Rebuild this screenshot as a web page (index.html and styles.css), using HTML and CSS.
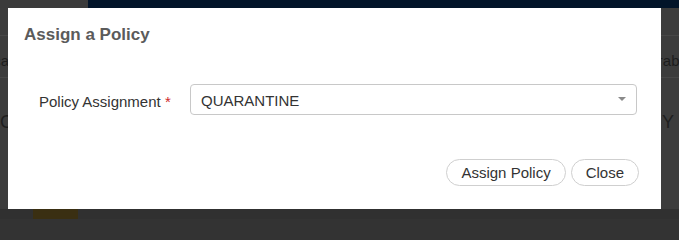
FILE: index.html
```html
<!DOCTYPE html>
<html>
<head>
<meta charset="utf-8">
<link rel="stylesheet" href="styles.css">
</head>
<body>
<div class="page">
  <div class="topbar"><div class="brand"></div><div class="nav"></div></div>
  <div class="content">
    <div class="gap-row"></div>
    <div class="thead">
      <div class="cell-left"><span>Critica</span></div>
      <div class="cell-right"><span>Vulnerable</span></div>
    </div>
    <div class="big-row">
      <div class="cell-left big"><span>C</span></div>
      <div class="cell-right big"><span>Y</span></div>
    </div>
  </div>
  <div class="bottom"><div class="chip"></div></div>
</div>

<div class="modal">
  <div class="modal-header">Assign a Policy</div>
  <div class="modal-body">
    <label class="field-label">Policy Assignment <span class="req">*</span></label>
    <div class="select">
      <span class="select-value">QUARANTINE</span>
      <span class="caret"></span>
    </div>
  </div>
  <div class="modal-footer">
    <button class="btn">Assign Policy</button>
    <button class="btn">Close</button>
  </div>
</div>
</body>
</html>
```

FILE: styles.css
```css
html, body {
  margin: 0;
  padding: 0;
}
html {
  background: #333;
}
body {
  width: 679px;
  height: 219px;
  overflow: hidden;
  position: relative;
  background: #3a3a3a;
  font-family: "Liberation Sans", Arial, sans-serif;
}
.page {
  display: flex;
  flex-direction: column;
  height: 219px;
}
.topbar {
  display: flex;
  height: 8px;
}
.brand {
  width: 88px;
  background: #3b3b3b;
}
.nav {
  flex: 1;
  background: #021429;
}
.content {
  flex: 1;
  background: #3c3c3c;
  display: flex;
  flex-direction: column;
}
.gap-row {
  height: 27px;
}
.thead {
  height: 41px;
  box-sizing: content-box;
  border-top: 1px solid #474747;
  border-bottom: 1px solid #474747;
  display: flex;
  justify-content: space-between;
  align-items: center;
  font-size: 15px;
  color: #1c1c1c;
}
.thead > div {
  padding-top: 7px;
}
.cell-left {
  width: 8px;
  overflow: hidden;
  display: flex;
  justify-content: flex-end;
  white-space: nowrap;
}
.cell-right {
  width: 18px;
  overflow: hidden;
  display: flex;
  justify-content: flex-start;
  white-space: nowrap;
}
.thead .cell-left span { margin-right: -1px; }
.thead .cell-right span { margin-left: -41px; }
.big-row {
  margin-top: 34px;
  display: flex;
  justify-content: space-between;
  font-size: 18px;
  color: #1e1e1e;
}
.big-row .cell-left span { margin-right: -5px; }
.big-row .cell-right span { margin-left: 1px; }
.bottom {
  height: 10px;
  background: #303030;
  display: flex;
}
.chip {
  width: 45px;
  margin-left: 33px;
  background: #3a2f12;
}

/* Modal */
.modal {
  position: absolute;
  left: 8px;
  top: 8px;
  width: 653px;
  height: 201px;
  background: #fff;
  box-sizing: border-box;
}
.modal-header {
  padding: 17px 16px 0;
  font-size: 17px;
  font-weight: bold;
  color: #5b5b5b;
  line-height: 19px;
}
.modal-body {
  margin-top: 40px;
  padding: 0 24px 0 31px;
  display: flex;
  align-items: center;
}
.field-label {
  width: 151px;
  font-size: 15px;
  color: #333;
  padding-top: 3px;
}
.req {
  color: #d0282a;
}
.select {
  flex: 1;
  height: 31px;
  box-sizing: border-box;
  border: 1px solid #c8c8c8;
  border-radius: 4px;
  display: flex;
  align-items: center;
  justify-content: space-between;
  padding: 0 10px 0 10px;
  font-size: 15px;
  color: #333;
}
.select-value {
  padding-top: 2px;
}
.caret {
  width: 0;
  height: 0;
  border-left: 4px solid transparent;
  border-right: 4px solid transparent;
  border-top: 4px solid #8a8a8a;
  margin-top: -2px;
}
.modal-footer {
  margin-top: 44px;
  padding-right: 22px;
  display: flex;
  justify-content: flex-end;
  gap: 5px;
}
.btn {
  height: 27px;
  padding: 0 14px;
  border: 1px solid #cfcfcf;
  border-radius: 14px;
  background: #fff;
  font-family: "Liberation Sans", Arial, sans-serif;
  font-size: 15px;
  color: #333;
  line-height: 25px;
}
```
